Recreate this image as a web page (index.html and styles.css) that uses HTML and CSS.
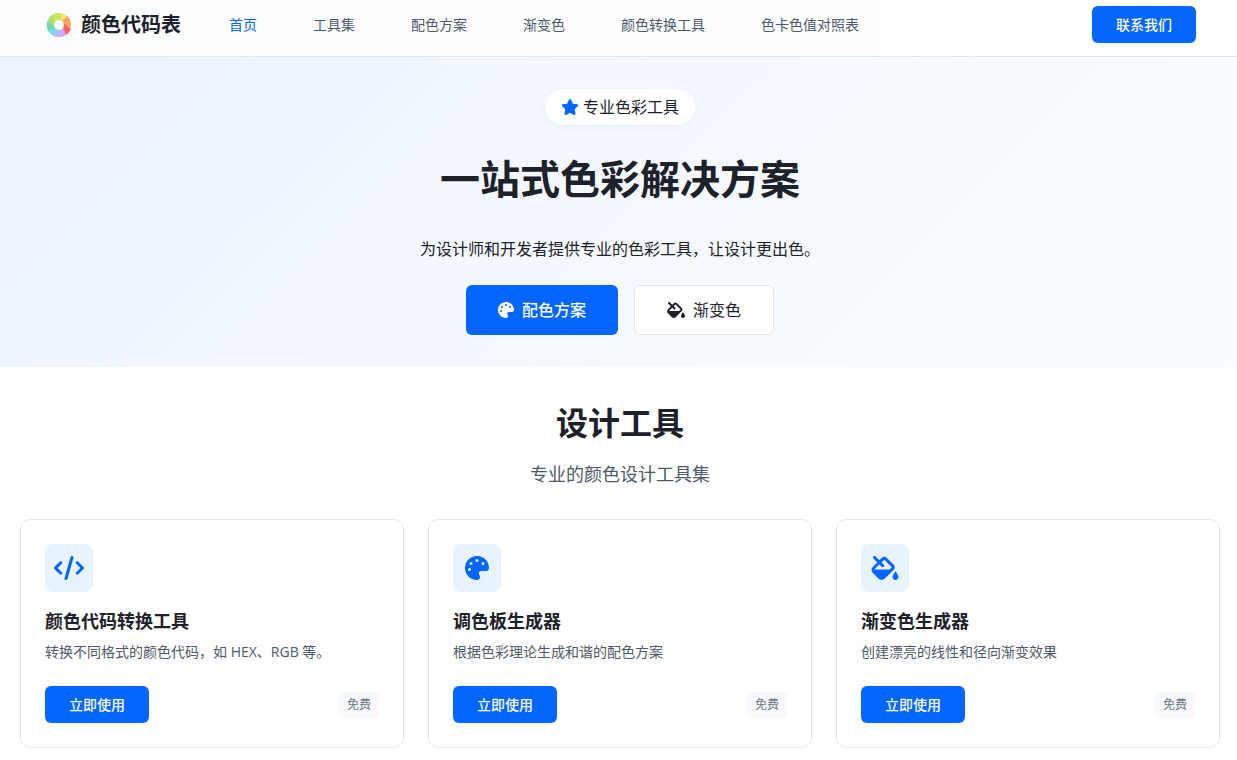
FILE: index.html
```html
<!DOCTYPE html>
<html lang="zh-CN">
<head>
    <meta charset="UTF-8">
    <meta name="viewport" content="width=device-width, initial-scale=1.0">
    <title>颜色代码表</title>
    <link rel="stylesheet" href="styles.css">
</head>
<body>
    <!-- 图标 -->
    <svg class="sprite" aria-hidden="true">
        <symbol id="icon-star" viewBox="0 0 576 512">
            <path d="M316.9 18C311.6 7 300.4 0 288.1 0s-23.4 7-28.8 18L195 150.3 51.4 171.5c-12 1.8-22 10.2-25.7 21.7s-.7 24.2 7.9 32.7L137.8 329 113.2 474.7c-2 12 3 24.2 12.9 31.3s23 8 33.8 2.3l128.3-68.5 128.3 68.5c10.8 5.7 23.9 4.9 33.8-2.3s14.9-19.3 12.9-31.3L438.5 329 542.7 225.9c8.6-8.5 11.7-21.2 7.9-32.7s-13.7-19.9-25.7-21.7L381.2 150.3 316.9 18z"/>
        </symbol>
        <symbol id="icon-palette" viewBox="0 0 512 512">
            <path d="M512 256c0 .9 0 1.8 0 2.7c-.4 36.5-33.6 61.3-70.1 61.3L344 320c-26.5 0-48 21.5-48 48c0 3.4 .4 6.7 1 9.9c2.1 10.2 6.5 20 10.8 29.9c6.1 13.8 12.1 27.5 12.1 42c0 31.8-21.6 60.7-53.4 62c-3.5 .1-7 .2-10.6 .2C114.6 512 0 397.4 0 256S114.6 0 256 0S512 114.6 512 256zM128 288a32 32 0 1 0 -64 0 32 32 0 1 0 64 0zm0-96a32 32 0 1 0 0-64 32 32 0 1 0 0 64zM288 96a32 32 0 1 0 -64 0 32 32 0 1 0 64 0zm96 96a32 32 0 1 0 0-64 32 32 0 1 0 0 64z"/>
        </symbol>
        <symbol id="icon-fill" viewBox="0 0 576 512">
            <path d="M41.4 9.4C53.9-3.1 74.1-3.1 86.6 9.4L168 90.7l53.1-53.1c28.1-28.1 73.7-28.1 101.8 0L474.3 189.1c28.1 28.1 28.1 73.7 0 101.8L283.9 481.4c-37.5 37.5-98.3 37.5-135.8 0L30.6 363.9c-37.5-37.5-37.5-98.3 0-135.8L122.7 136 41.4 54.6c-12.5-12.5-12.5-32.8 0-45.3zm176 221.3L168 181.3 75.9 273.4c-4.2 4.2-7 9.3-8.4 14.6l319.2 0 42.3-42.3c3.1-3.1 3.1-8.2 0-11.3L277.7 82.9c-3.1-3.1-8.2-3.1-11.3 0L213.3 136l49.4 49.4c12.5 12.5 12.5 32.8 0 45.3s-32.8 12.5-45.3 0zM512 512c-35.3 0-64-28.7-64-64c0-25.2 32.6-79.6 51.2-108.7c6-9.4 19.5-9.4 25.5 0C543.4 368.4 576 422.8 576 448c0 35.3-28.7 64-64 64z"/>
        </symbol>
        <symbol id="icon-code" viewBox="0 0 640 512">
            <path d="M392.8 1.2c-17-4.9-34.7 5-39.6 22l-128 448c-4.9 17 5 34.7 22 39.6s34.7-5 39.6-22l128-448c4.9-17-5-34.7-22-39.6zm80.6 120.1c-12.5 12.5-12.5 32.8 0 45.3L562.7 256l-89.4 89.4c-12.5 12.5-12.5 32.8 0 45.3s32.8 12.5 45.3 0l112-112c12.5-12.5 12.5-32.8 0-45.3l-112-112c-12.5-12.5-32.8-12.5-45.3 0zm-306.7 0c-12.5-12.5-32.8-12.5-45.3 0l-112 112c-12.5 12.5-12.5 32.8 0 45.3l112 112c12.5 12.5 32.8 12.5 45.3 0s12.5-32.8 0-45.3L77.3 256l89.4-89.4c12.5-12.5 12.5-32.8 0-45.3z"/>
        </symbol>
    </svg>

    <header class="header">
        <div class="header-inner">
            <a href="#" class="logo">
                <svg class="logo-icon" viewBox="0 0 30 30" aria-hidden="true">
                    <circle cx="15" cy="15" r="12" fill="#ffdf6b"/>
                    <path fill="#ffa465" d="M18 11L23.500 6.500A12 12 0 0 1 27 15L24 19 19 17z"/>
                    <path fill="#f9606a" d="M19 13L27 19A12 12 0 0 1 21 25.400L14 19z"/>
                    <path fill="#c5aeff" d="M19 18L22 24.700A12 12 0 0 1 9 25.400L14 18z"/>
                    <path fill="#7bdae6" d="M16 19L10 26A12 12 0 0 1 3.200 18L10 15z"/>
                    <path fill="#70d6b0" d="M12 19L4 20A12 12 0 0 1 4 10L11 13z"/>
                    <path fill="#a9e068" d="M10 17L3.600 11A12 12 0 0 1 16 3L14 11z"/>
                    <path fill="#c9e565" d="M10 12L9 4.600A12 12 0 0 1 17 3.200L18 11z"/>
                    <circle cx="15" cy="15" r="5" fill="#fff"/>
                </svg>
                <span>颜色代码表</span>
            </a>
            <nav class="nav">
                <a href="#" class="active">首页</a>
                <a href="#">工具集</a>
                <a href="#">配色方案</a>
                <a href="#">渐变色</a>
                <a href="#">颜色转换工具</a>
                <a href="#">色卡色值对照表</a>
            </nav>
            <button type="button" class="btn">联系我们</button>
        </div>
    </header>

    <section class="hero">
        <div class="badge">
            <svg class="badge-icon" aria-hidden="true"><use href="#icon-star"/></svg>
            <span>专业色彩工具</span>
        </div>
        <h1>一站式色彩解决方案</h1>
        <p>为设计师和开发者提供专业的色彩工具，让设计更出色。</p>
        <div class="hero-buttons">
            <a href="#" class="hero-btn primary">
                <svg class="palette-icon" aria-hidden="true"><use href="#icon-palette"/></svg>
                <span>配色方案</span>
            </a>
            <a href="#" class="hero-btn">
                <svg class="fill-icon" aria-hidden="true"><use href="#icon-fill"/></svg>
                <span>渐变色</span>
            </a>
        </div>
    </section>

    <section class="tools">
        <h2>设计工具</h2>
        <p class="subtitle">专业的颜色设计工具集</p>
        <div class="tools-grid">
            <div class="card">
                <div class="card-icon"><svg aria-hidden="true"><use href="#icon-code"/></svg></div>
                <h3>颜色代码转换工具</h3>
                <p>转换不同格式的颜色代码，如 HEX、RGB 等。</p>
                <div class="card-footer">
                    <button type="button" class="btn">立即使用</button>
                    <span class="tag">免费</span>
                </div>
            </div>
            <div class="card">
                <div class="card-icon"><svg aria-hidden="true"><use href="#icon-palette"/></svg></div>
                <h3>调色板生成器</h3>
                <p>根据色彩理论生成和谐的配色方案</p>
                <div class="card-footer">
                    <button type="button" class="btn">立即使用</button>
                    <span class="tag">免费</span>
                </div>
            </div>
            <div class="card">
                <div class="card-icon"><svg aria-hidden="true"><use href="#icon-fill"/></svg></div>
                <h3>渐变色生成器</h3>
                <p>创建漂亮的线性和径向渐变效果</p>
                <div class="card-footer">
                    <button type="button" class="btn">立即使用</button>
                    <span class="tag">免费</span>
                </div>
            </div>
        </div>
    </section>
</body>
</html>
```
FILE: styles.css
```css
* {
    margin: 0;
    padding: 0;
    box-sizing: border-box;
}

body {
    font-family: "Open Sans", "Noto Sans CJK SC", sans-serif;
    font-size: 16px;
    line-height: 24px;
    color: #1d2129;
    background: #fff;
}

a {
    color: inherit;
    text-decoration: none;
}

svg {
    fill: currentColor;
    flex-shrink: 0;
}

.sprite {
    display: none;
}

/* 导航栏 */
.header {
    padding: 0 17px 0 20px;
    background: linear-gradient(90deg, #fbfdff, #fff);
    border-bottom: 1px solid #e5e6eb;
}

.header-inner {
    max-width: 1200px;
    margin: 0 auto;
    padding: 6px 24px 13px;
    display: flex;
    align-items: center;
}

.logo {
    display: flex;
    align-items: center;
    gap: 7px;
    font-size: 20px;
    font-weight: 700;
}

.logo-icon {
    width: 30px;
    height: 30px;
}

.nav {
    display: flex;
    gap: 56px;
    margin-left: 48px;
    font-size: 14px;
    color: #4e5969;
}

.nav .active {
    color: #0066ff;
}

.btn {
    padding: 8px 24px;
    font-family: inherit;
    font-size: 14px;
    font-weight: 500;
    line-height: 21px;
    color: #fff;
    background: #0066ff;
    border: none;
    border-radius: 6px;
    cursor: pointer;
}

.btn:hover {
    background: #0052cc;
}

.header .btn {
    margin-left: auto;
}

/* 首屏 */
.hero {
    display: flex;
    flex-direction: column;
    align-items: center;
    padding: 32px 17px 32px 20px;
    text-align: center;
    background: linear-gradient(135deg, #ebf3ff 0%, #f5f9ff 50%, #fafdff 100%);
}

.badge {
    display: flex;
    align-items: center;
    gap: 4px;
    padding: 6px 16px;
    background: #fff;
    border-radius: 18px;
    box-shadow: 0 2px 8px rgba(0, 0, 0, 0.04);
}

.badge-icon {
    width: 18px;
    height: 16px;
    color: #0066ff;
}

.hero h1 {
    margin: 30px 0 34px;
    font-size: 40px;
    line-height: 48px;
}

.hero-buttons {
    display: flex;
    gap: 16px;
    margin-top: 24px;
}

.hero-btn {
    display: flex;
    align-items: center;
    gap: 8px;
    height: 50px;
    padding: 0 32px;
    background: #fff;
    border: 1px solid #e5e6eb;
    border-radius: 6px;
}

.hero-btn.primary {
    font-weight: 500;
    color: #fff;
    background: #0066ff;
    border: none;
}

.palette-icon {
    width: 16px;
    height: 16px;
}

.fill-icon {
    width: 18px;
    height: 16px;
}

/* 工具列表 */
.tools {
    padding: 32px 17px 12px 20px;
    text-align: center;
}

.tools h2 {
    font-size: 32px;
    line-height: 48px;
}

.subtitle {
    margin: 12px 0 30px;
    font-size: 18px;
    line-height: 30px;
    color: #4e5969;
}

.tools-grid {
    display: grid;
    grid-template-columns: repeat(3, 1fr);
    gap: 24px;
    max-width: 1200px;
    margin: 0 auto;
    text-align: left;
}

.card {
    padding: 24px;
    border: 1px solid #e5e6eb;
    border-radius: 10px;
}

.card-icon {
    display: flex;
    align-items: center;
    justify-content: center;
    width: 48px;
    height: 48px;
    color: #0066ff;
    background: #e8f3ff;
    border-radius: 8px;
}

.card-icon svg {
    width: 32px;
    height: 24px;
}

.card h3 {
    margin-top: 16px;
    font-size: 18px;
    line-height: 26px;
}

.card p {
    margin: 8px 0 24px;
    font-size: 14px;
    line-height: 20px;
    color: #4e5969;
}

.card-footer {
    display: flex;
    align-items: center;
    justify-content: space-between;
}

.tag {
    padding: 4px 8px;
    font-size: 12px;
    line-height: 18px;
    color: #6b7785;
    background: #f7f9fc;
    border-radius: 4px;
}
```
